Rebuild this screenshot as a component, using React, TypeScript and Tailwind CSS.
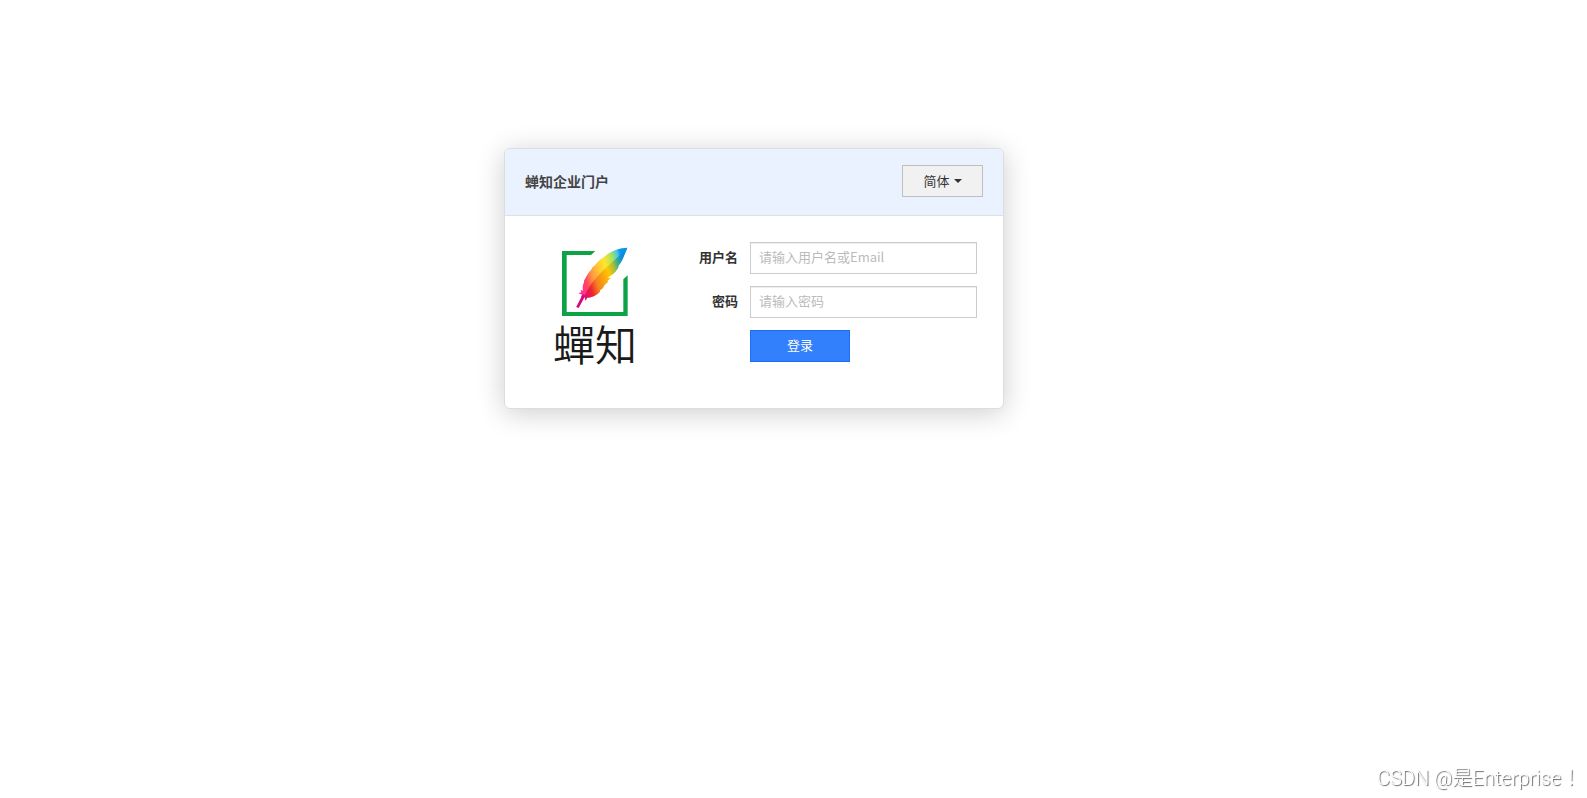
import React from "react";

function Feather() {
  return (
    <svg viewBox="63 33 204 213" className="h-[71px] w-[68px]" role="img" aria-label="蝉知">
      <defs>
        <linearGradient id="plume" gradientUnits="userSpaceOnUse" x1="122" y1="150" x2="258" y2="110">
          <stop offset="0" stopColor="#ff2f92" />
          <stop offset="0.14" stopColor="#ff4a5e" />
          <stop offset="0.3" stopColor="#ff9a42" />
          <stop offset="0.46" stopColor="#ffc832" />
          <stop offset="0.62" stopColor="#ffe62e" />
          <stop offset="0.8" stopColor="#a9e260" />
          <stop offset="0.93" stopColor="#4bc8e0" />
          <stop offset="1" stopColor="#0a95ea" />
        </linearGradient>
        <linearGradient id="shade" gradientUnits="userSpaceOnUse" x1="130" y1="150" x2="258" y2="110">
          <stop offset="0" stopColor="#e5106a" />
          <stop offset="0.14" stopColor="#ee2430" />
          <stop offset="0.3" stopColor="#f5801f" />
          <stop offset="0.48" stopColor="#fba510" />
          <stop offset="0.62" stopColor="#ffc800" />
          <stop offset="0.76" stopColor="#b4bf2e" />
          <stop offset="0.88" stopColor="#35b08c" />
          <stop offset="1" stopColor="#0a8be0" />
        </linearGradient>
      </defs>
      <path d="M66 48H166L153 60H80V231H250V133L263 121V243H66Z" fill="#0ba345" />
      <path
        d="M262 38C240 38 220 45 202 58L192 66L183 72C174 79 168 87 162 94L157 97L156 101C148 110 140 120 135 132L132 137L132 142C128 150 127 158 129 167L121 164L124 172L115 175L126 179L122 187L129 184L109 216L116 218L133 184L137 197L141 188C157 187 169 181 180 170L180 166L188 160L194 149L203 142L203 137L212 129L203 128C220 118 229 109 235 97L235 92L241 85C249 72 255 54 262 38Z"
        fill="url(#plume)"
      />
      <path
        d="M262 38C225 81 163 115 133 184L137 197L141 188C157 187 169 181 180 170L180 166L188 160L194 149L203 142L203 137L212 129L203 128C220 118 229 109 235 97L235 92L241 85C249 72 255 54 262 38Z"
        fill="url(#shade)"
      />
      <path d="M109 216L128 178L136 182L116 218Z" fill="#d3087b" />
    </svg>
  );
}

function Field({ id, label, type, placeholder }: { id: string; label: string; type: string; placeholder: string }) {
  return (
    <div className="flex gap-3">
      <label htmlFor={id} className="w-[53px] text-right font-bold leading-[30px]">
        {label}
      </label>
      <input
        id={id}
        type={type}
        placeholder={placeholder}
        className="h-8 min-w-0 flex-1 border border-[#cccccc] bg-white px-2 pb-[3px] shadow-[inset_0_1px_1px_rgba(0,0,0,0.075)] placeholder:text-[#bbbbbb]"
      />
    </div>
  );
}

export default function App() {
  return (
    <div className="min-h-screen bg-white pt-[148px] pr-[79px] font-['Noto_Sans_CJK_SC',sans-serif] text-[13px] text-[#333333]">
      <main className="mx-auto w-full max-w-[500px] overflow-hidden rounded-md border border-[#dddddd] bg-white shadow-[0_4px_28px_rgba(0,0,0,0.2)]">
        <header className="flex items-start justify-between border-b border-[#e0e0e0] bg-[#ebf2ff] px-5 pt-4 pb-[18px]">
          <h1 className="text-sm leading-8 font-bold text-[#444444]">蝉知企业门户</h1>
          <button
            type="button"
            aria-haspopup="listbox"
            className="flex h-8 w-[81px] items-center justify-center gap-1 border border-[#bfbfbf] bg-[#f1f1f1] leading-[30px]"
          >
            简体
            <span className="border-x-4 border-t-4 border-x-transparent border-t-[#333333]" />
          </button>
        </header>
        <div className="flex pt-[26px] pr-[26px] pb-11">
          <div className="flex w-[180px] flex-col items-center pt-1">
            <Feather />
            <span className="mt-[5px] font-['Noto_Sans_CJK_TC',sans-serif] text-[42px] leading-[42px] font-[350] text-[#1a1a1a]">
              蟬知
            </span>
          </div>
          <form className="flex flex-1 flex-col gap-3" onSubmit={(e) => e.preventDefault()}>
            <Field id="account" label="用户名" type="text" placeholder="请输入用户名或Email" />
            <Field id="password" label="密码" type="password" placeholder="请输入密码" />
            <button
              type="submit"
              className="ml-[65px] h-8 w-[100px] border border-[#1a6dff] bg-[#3280fc] pb-[3px] text-white"
            >
              登录
            </button>
          </form>
        </div>
      </main>
      <div className="fixed right-1.5 bottom-1 font-[Roboto,'Noto_Sans_CJK_TC',sans-serif] text-xl leading-8 font-light text-white [text-shadow:1px_1px_1px_#666666]">
        CSDN @是Enterprise<span lang="zh-TW">！</span>
      </div>
    </div>
  );
}
